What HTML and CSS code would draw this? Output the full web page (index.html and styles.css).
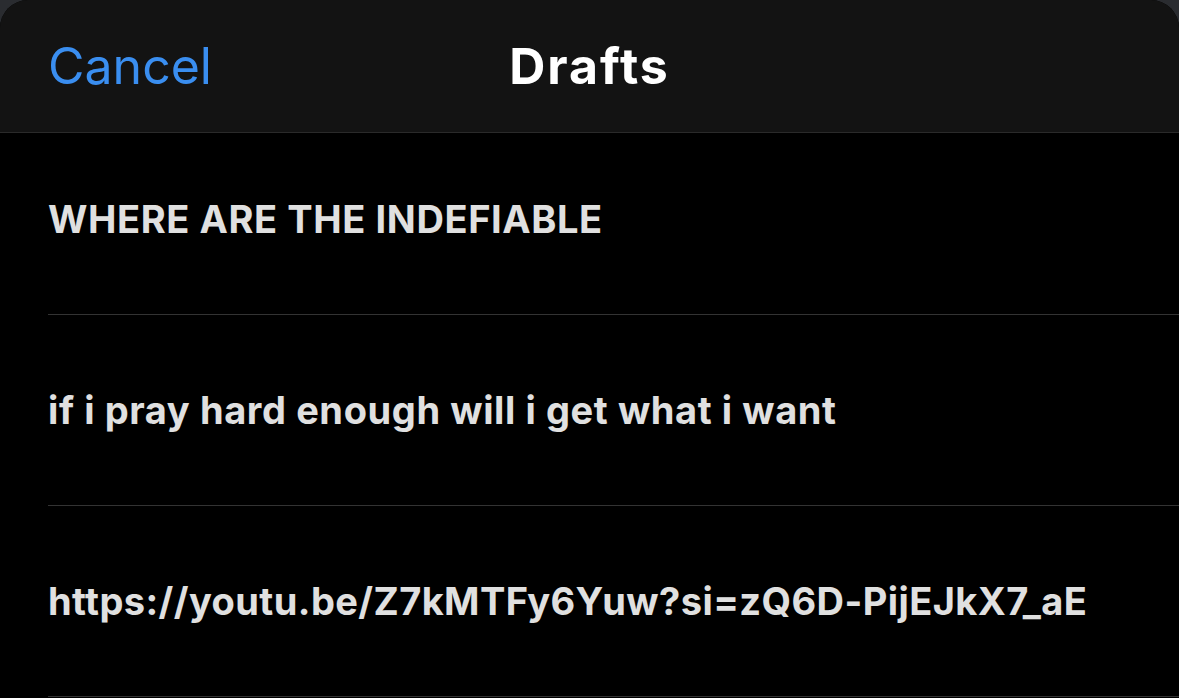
FILE: index.html
```html
<!DOCTYPE html>
<html>
<head>
<meta charset="utf-8">
<link rel="stylesheet" href="styles.css">
</head>
<body>
<div class="sheet">
  <header class="nav">
    <span class="cancel">Cancel</span>
    <span class="title">Drafts</span>
  </header>
  <ul class="list">
    <li class="row"><span class="text">WHERE ARE THE INDEFIABLE</span></li>
    <li class="row"><span class="text">if i pray hard enough will i get what i want</span></li>
    <li class="row"><span class="text url">https://youtu.be/Z7kMTFy6Yuw?si=zQ6D-PijEJkX7_aE</span></li>
  </ul>
</div>
</body>
</html>
```
FILE: styles.css
```css
html, body {
  margin: 0;
  padding: 0;
  background: #2a2c30;
  width: 1179px;
  height: 698px;
  overflow: hidden;
}
.sheet {
  width: 1179px;
  height: 698px;
  background: #000;
  border-radius: 28px 28px 0 0;
  overflow: hidden;
  font-family: Inter, "Noto Sans", sans-serif;
}
.nav {
  height: 133px;
  box-sizing: border-box;
  background: #131313;
  border-bottom: 1px solid #2a2a2a;
  display: flex;
  align-items: center;
  position: relative;
  z-index: 1;
}
.cancel {
  margin-left: 48px;
  color: #3a8ef0;
  font-size: 50px;
  font-weight: 400;
}
.title {
  position: absolute;
  left: 0;
  right: 0;
  text-align: center;
  color: #fff;
  font-size: 50px;
  font-weight: 700;
  letter-spacing: 2px;
  pointer-events: none;
}
.list {
  list-style: none;
  margin: -9px 0 0 0;
  padding: 0 0 0 48px;
}
.row {
  height: 191px;
  border-bottom: 1px solid #333;
  display: flex;
  align-items: center;
  box-sizing: border-box;
}
.text {
  color: #e0e0e0;
  font-size: 38px;
  font-weight: 700;
  letter-spacing: 0.6px;
}
.url {
  letter-spacing: 0.42px;
}
```
